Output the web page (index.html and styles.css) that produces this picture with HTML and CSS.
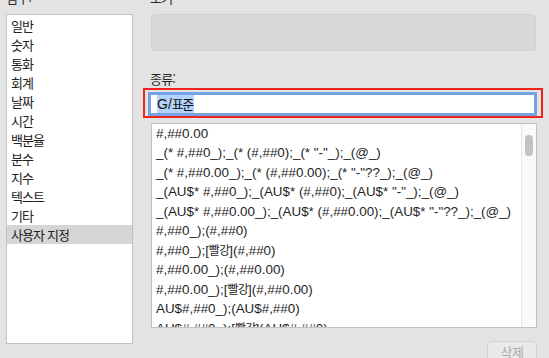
FILE: index.html
```html
<!DOCTYPE html>
<html lang="ko">
<head>
<meta charset="utf-8">
<link rel="stylesheet" href="styles.css">
</head>
<body>
<div class="page">
  <div class="left">
    <div class="label">범주:</div>
    <ul class="cats">
      <li>일반</li>
      <li>숫자</li>
      <li>통화</li>
      <li>회계</li>
      <li>날짜</li>
      <li>시간</li>
      <li>백분율</li>
      <li>분수</li>
      <li>지수</li>
      <li>텍스트</li>
      <li>기타</li>
      <li class="sel">사용자 지정</li>
    </ul>
  </div>
  <div class="right">
    <div class="label indent">보기</div>
    <div class="preview"></div>
    <div class="label indent kind">종류:</div>
    <div class="redbox">
      <div class="input"><span class="hl">G/<span class="ko">표준</span></span></div>
    </div>
    <div class="formats">
      <ul class="fmtlist">
        <li>#,##0.00</li>
        <li>_(* #,##0_);_(* (#,##0);_(* "-"_);_(@_)</li>
        <li>_(* #,##0.00_);_(* (#,##0.00);_(* "-"??_);_(@_)</li>
        <li>_(AU$* #,##0_);_(AU$* (#,##0);_(AU$* "-"_);_(@_)</li>
        <li>_(AU$* #,##0.00_);_(AU$* (#,##0.00);_(AU$* "-"??_);_(@_)</li>
        <li>#,##0_);(#,##0)</li>
        <li>#,##0_);[<span class="ko">빨강</span>](#,##0)</li>
        <li>#,##0.00_);(#,##0.00)</li>
        <li>#,##0.00_);[<span class="ko">빨강</span>](#,##0.00)</li>
        <li>AU$#,##0_);(AU$#,##0)</li>
        <li>AU$#,##0_);[<span class="ko">빨강</span>](AU$#,##0)</li>
      </ul>
      <div class="scrollbar"><div class="thumb"></div></div>
    </div>
    <div class="actions"><button class="btn">삭제</button></div>
  </div>
</div>
</body>
</html>
```

FILE: styles.css
```css
html, body {
  margin: 0;
  padding: 0;
  background: #e3e3e3;
  overflow: hidden;
  width: 549px;
  height: 358px;
}
body {
  font-family: "Liberation Sans", "Noto Sans CJK KR", sans-serif;
  font-size: 13px;
  color: #1e1e1e;
}
.page {
  display: flex;
  gap: 10px;
  padding-left: 6px;
  margin-top: -10px;
}
.left {
  width: 127px;
  display: flex;
  flex-direction: column;
}
.label {
  height: 16px;
  line-height: 16px;
  font-family: "Noto Sans CJK KR", sans-serif;
  font-size: 13px;
  letter-spacing: -0.8px;
  color: #2a2a2a;
}
.left .label { margin-bottom: 8px; }
.cats {
  list-style: none;
  margin: 0;
  padding: 1px 0 0;
  height: 327px;
  background: #fff;
  border: 1px solid #c2c2c2;
}
.cats li {
  height: 19px;
  line-height: 19px;
  padding-left: 4px;
  font-family: "Noto Sans CJK KR", sans-serif;
  font-size: 13px;
  letter-spacing: -0.9px;
  color: #222;
}
.cats li.sel { background: #d6d6d6; }
.right {
  width: 400px;
  display: flex;
  flex-direction: column;
}
.indent { padding-left: 7px; }
.right > .label:first-child { margin-bottom: 8px; }
.preview {
  margin-left: 8px;
  width: 383px;
  height: 35px;
  background: #d8d8d8;
  border: 1px solid #d1d1d1;
  border-radius: 4px;
}
.kind {
  margin-top: 20px;
  margin-bottom: 1px;
}
.redbox {
  height: 24px;
  border: 2px solid #f2231c;
  padding: 2px 4px 0 3px;
}
.input {
  height: 18px;
  border: 3px solid #74a2e4;
  background: #fff;
  padding-left: 6px;
  display: flex;
  align-items: center;
}
.hl {
  background: #b3d3fb;
  font-size: 14px;
  line-height: 18px;
  padding: 0 1px 0 0;
  color: #111;
}
.hl .ko {
  font-family: "Noto Sans CJK KR", sans-serif;
  font-size: 13px;
  letter-spacing: -1.4px;
}
.formats {
  margin-top: 5px;
  margin-left: 8px;
  width: 384px;
  height: 203px;
  background: #fff;
  border: 1px solid #c2c2c2;
  display: flex;
  overflow: hidden;
}
.fmtlist {
  flex: 1;
  list-style: none;
  margin: 0;
  padding: 0 0 0 4px;
  overflow: hidden;
  white-space: nowrap;
}
.fmtlist li {
  height: 19.4px;
  line-height: 19.4px;
  font-size: 13.4px;
  color: #1e1e1e;
}
.fmtlist .ko {
  font-family: "Noto Sans CJK KR", sans-serif;
  font-size: 12px;
  letter-spacing: -0.8px;
}
.scrollbar {
  width: 14px;
  flex: none;
  background: #fafafa;
  border-left: 1px solid #e6e6e6;
  padding-top: 11px;
  display: flex;
  justify-content: center;
}
.thumb {
  width: 8px;
  height: 21px;
  border-radius: 4px;
  background: #c2c2c2;
}
.actions {
  display: flex;
  justify-content: flex-end;
  padding-right: 6px;
  margin-top: 13px;
}
.btn {
  width: 50px;
  height: 22px;
  border: 1px solid #d2d2d2;
  border-radius: 4px;
  background: #e9e9e9;
  color: #ababab;
  font-family: "Noto Sans CJK KR", sans-serif;
  font-size: 13px;
  letter-spacing: -0.5px;
  padding: 0;
  line-height: 18px;
  display: block;
}
```
